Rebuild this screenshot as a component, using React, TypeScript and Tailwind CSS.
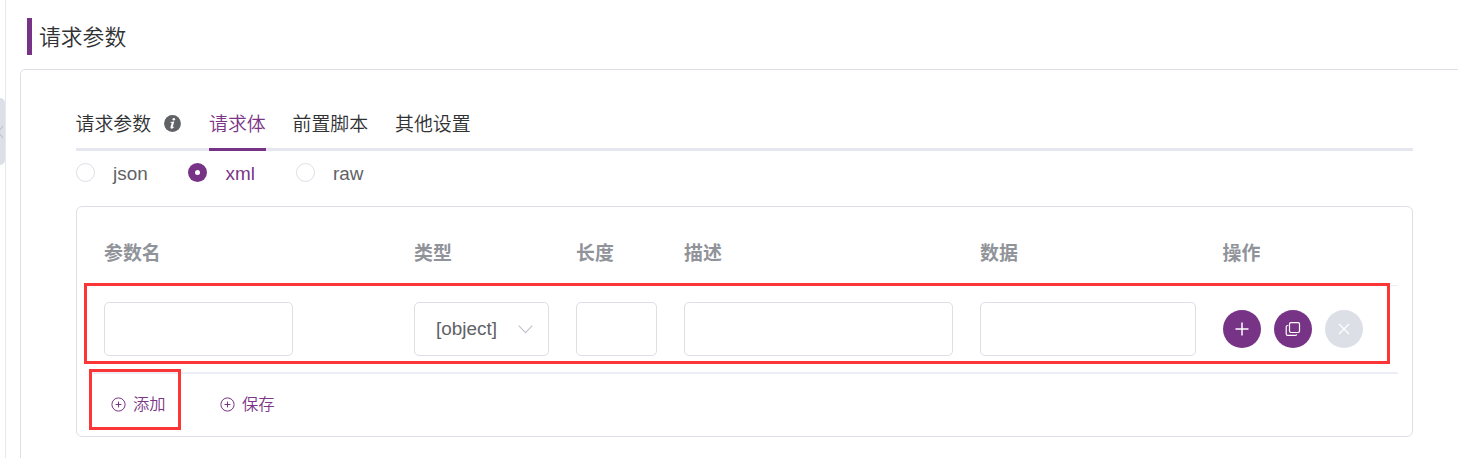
import type { ReactNode } from "react";

function InfoIcon() {
  return (
    <svg className="block h-[17px] w-[17px]" viewBox="0 0 17 17">
      <circle cx="8.5" cy="8.5" r="8.4" fill="#606266" />
      <circle cx="9.8" cy="4.2" r="1.3" fill="#fff" />
      <path d="M6.4 7 10.3 6.400 8.700 11.900q-.1.6.4.300l.8-.7.4.4Q8.700 13.900 7.300 13.700q-1.200-.2-.8-1.600L7.700 7.900q0-.4-1.300-.4z" fill="#fff" />
    </svg>
  );
}

function CirclePlus() {
  return (
    <svg className="block h-[15px] w-[15px] shrink-0" viewBox="0 0 15 15" fill="none" stroke="#7a3587">
      <circle cx="7.5" cy="7.5" r="6.6" strokeWidth="1" />
      <path d="M4.6 7.5h5.8M7.5 4.6v5.8" strokeWidth="1" />
    </svg>
  );
}

function Radio({ label, checked }: { label: string; checked?: boolean }) {
  return (
    <label className="flex h-[19px] items-center">
      <span
        className={
          checked
            ? "flex h-[19px] w-[19px] items-center justify-center rounded-full bg-[#773385]"
            : "h-[19px] w-[19px] rounded-full border border-[#dcdfe6]"
        }
      >
        {checked && <span className="h-[5px] w-[5px] rounded-full bg-white" />}
      </span>
      <span className={checked ? "mt-[3px] ml-[18.5px] text-[#7a3587]" : "mt-[3px] ml-[18px] text-[#606266]"}>{label}</span>
    </label>
  );
}

function Tab({ children, active }: { children: ReactNode; active?: boolean }) {
  return (
    <div
      className={
        active
          ? "flex h-[53px] items-center border-b-[3px] border-[#773385] pt-[4px] text-[#7a3587]"
          : "flex h-[53px] items-center border-b-[3px] border-transparent pt-[4px] text-[#303133]"
      }
    >
      {children}
    </div>
  );
}

function RoundButton({ children, disabled }: { children: ReactNode; disabled?: boolean }) {
  return (
    <button
      className={
        disabled
          ? "flex h-[38px] w-[38px] items-center justify-center rounded-full bg-[#dcdfe6]"
          : "flex h-[38px] w-[38px] items-center justify-center rounded-full bg-[#773385]"
      }
    >
      {children}
    </button>
  );
}

const COLUMNS = "grid grid-cols-[310px_162px_108px_296px_242.5px_1fr] pl-[13px]";
const FIELD = "h-[54px] rounded-[5px] border border-[#dcdfe6] bg-white outline-none";

export default function App() {
  return (
    <div className="flex h-[458px] w-[1458px] overflow-hidden bg-white font-['Liberation_Sans','Noto_Sans_CJK_SC',sans-serif] text-[18.9px]">
      <aside className="h-full w-[6px] shrink-0 border-r border-[#e6e8f0] pt-[98px]">
        <div className="flex h-[67px] w-[5px] items-center overflow-hidden rounded-r-[6px] bg-[#dcdfe6]">
          <svg className="h-[12px] w-[4px]" viewBox="0 0 4 12" fill="none" stroke="#b4b8c0" strokeWidth="1">
            <path d="M3 0 -2 6l5 6" />
          </svg>
        </div>
      </aside>
      <main className="flex w-[1452px] shrink-0 flex-col pt-[18px] pl-[14px]">
        <h2 className="ml-[7px] flex h-[37px] shrink-0 items-center border-l-[5px] border-[#773385] pt-[3px] pl-[7px] text-[21.8px] font-[350] text-[#303133]">
          请求参数
        </h2>
        <section className="mt-[14px] h-[420px] w-[1460px] shrink-0 rounded-tl-[5px] border border-[#dcdfe6] pt-[28px] pl-[55px]">
          <nav className="flex h-[53px] w-[1337px] bg-[linear-gradient(#e4e7ed,#e4e7ed)] bg-[length:100%_3px] bg-bottom bg-no-repeat font-[350]">
            <div className="w-[133px]">
              <Tab>
                <span className="-ml-[0.5px] w-[88.5px]">请求参数</span>
                <div className="-mt-[4px]">
                  <InfoIcon />
                </div>
              </Tab>
            </div>
            <div className="w-[83.5px]">
              <div className="w-[57px] whitespace-nowrap">
                <Tab active>请求体</Tab>
              </div>
            </div>
            <div className="w-[102.5px]">
              <Tab>前置脚本</Tab>
            </div>
            <Tab>其他设置</Tab>
          </nav>
          <div className="mt-[12px] flex h-[20px]">
            <div className="w-[112px]">
              <Radio label="json" />
            </div>
            <div className="w-[108px]">
              <Radio label="xml" checked />
            </div>
            <Radio label="raw" />
          </div>
          <div className="mt-[23px] h-[231px] w-[1337px] rounded-[6px] border border-[#dcdfe6] px-[14px]">
            <div className={`${COLUMNS} h-[79px] items-center border-b border-[#ebeef5] pt-[17px] font-bold text-[#909399]`}>
              <span>参数名</span>
              <span>类型</span>
              <span>长度</span>
              <span>描述</span>
              <span>数据</span>
              <span>操作</span>
            </div>
            <div className="relative h-[88px] border-b-2 border-[#ebeef5]">
              <div className={`${COLUMNS} h-[86px] items-center`}>
                <input className={`${FIELD} w-[189px]`} />
                <div className={`${FIELD} flex w-[135px] items-center justify-between pr-[15px] pl-[21px] text-[#606266]`}>
                  <span className="mt-px">[object]</span>
                  <svg className="h-[9px] w-[15px]" viewBox="0 0 15 9" fill="none" stroke="#c0c4cc" strokeWidth="1.2">
                    <path d="m.7.7 6.8 7 6.8-7" />
                  </svg>
                </div>
                <input className={`${FIELD} w-[81px]`} />
                <input className={`${FIELD} w-[269px]`} />
                <input className={`${FIELD} w-[216px]`} />
                <div className="flex gap-[13px]">
                  <RoundButton>
                    <svg className="h-[14px] w-[14px]" viewBox="0 0 14 14" stroke="#fff" strokeWidth="1.5">
                      <path d="M.5 7h13M7 .5v13" />
                    </svg>
                  </RoundButton>
                  <RoundButton>
                    <svg className="h-[16px] w-[16px]" viewBox="0 0 16 16" fill="none" stroke="#fff" strokeWidth="1.2">
                      <rect x="4.5" y="1.7" width="10" height="9.8" rx="1.4" />
                      <path d="M3.3 4.500H2.600q-1.400 0-1.400 1.400v7q0 1.400 1.400 1.400h7.800q1.200 0 1.400-1" />
                    </svg>
                  </RoundButton>
                  <RoundButton disabled>
                    <svg className="h-[12px] w-[12px]" viewBox="0 0 12 12" stroke="#fff" strokeWidth="1.3">
                      <path d="m1 1 10 10M11 1 1 11" />
                    </svg>
                  </RoundButton>
                </div>
              </div>
              <div className="pointer-events-none absolute -top-[3px] -left-[7px] h-[81px] w-[1306px] border-[3px] border-[#fc3636]" />
            </div>
            <div className="relative flex h-[61px] items-center pl-[20px] text-[16.3px] font-[350] text-[#7a3587]">
              <button className="flex w-[109px] items-center gap-[7px]">
                <CirclePlus />
                添加
              </button>
              <button className="flex items-center gap-[7px]">
                <CirclePlus />
                保存
              </button>
              <div className="pointer-events-none absolute -top-[5px] -left-[2px] h-[61px] w-[92px] border-[3px] border-[#fc3636]" />
            </div>
          </div>
        </section>
      </main>
    </div>
  );
}
